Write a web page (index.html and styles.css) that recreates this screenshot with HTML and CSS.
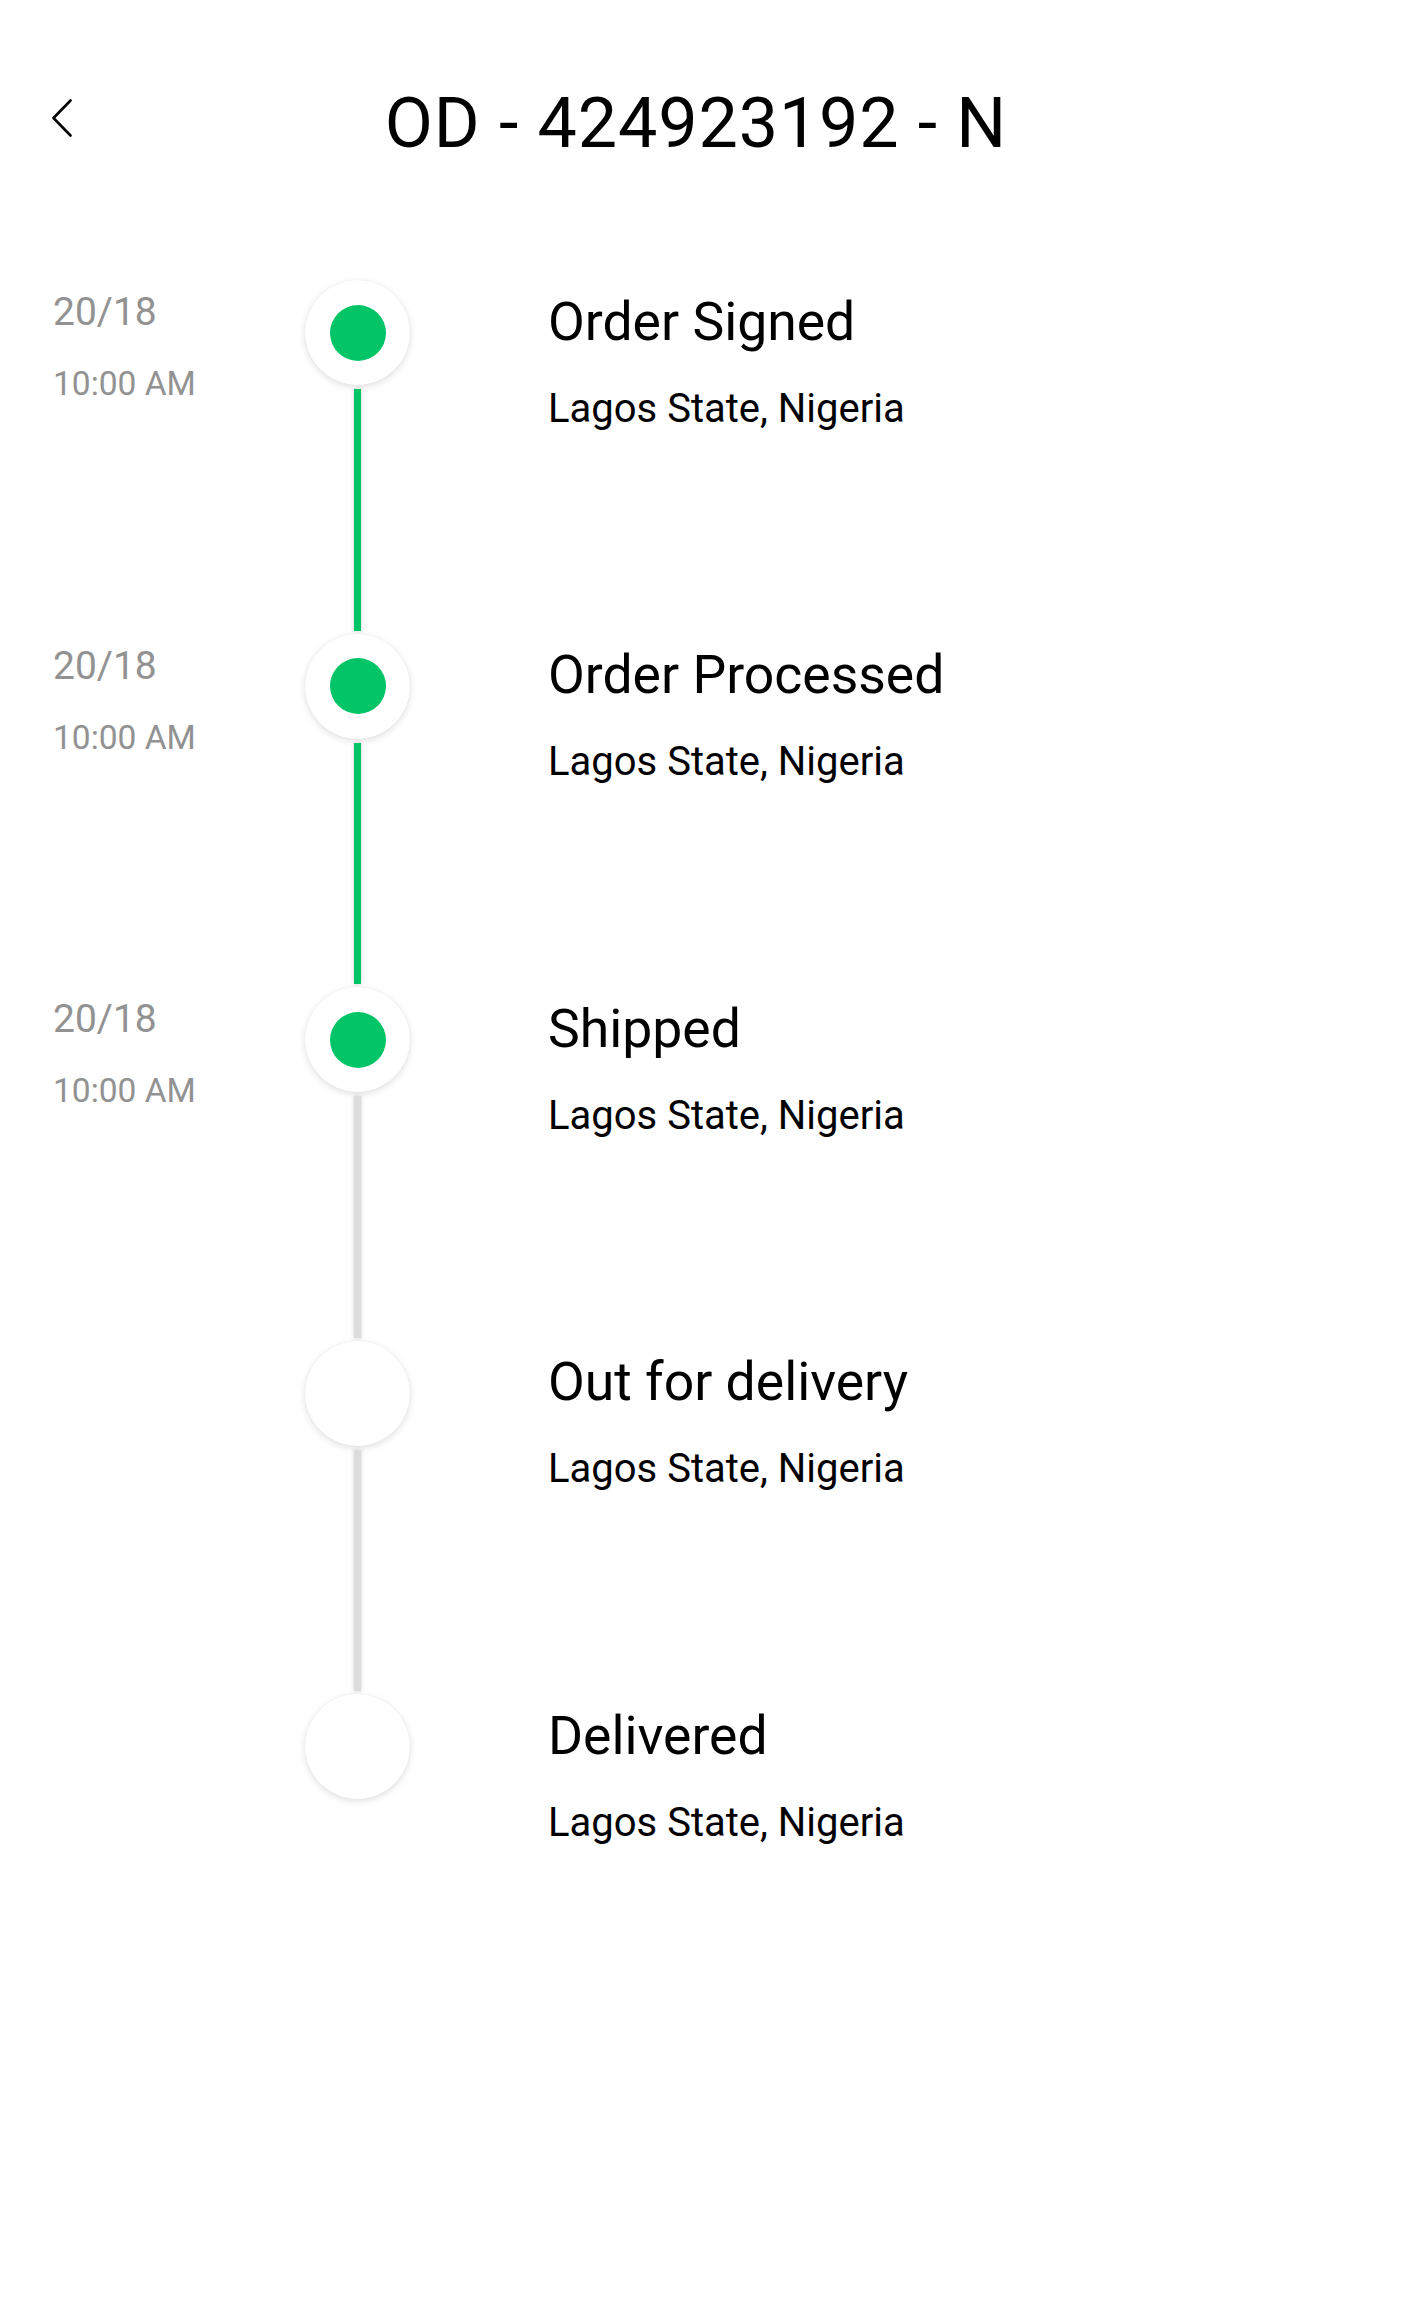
FILE: index.html
```html
<!DOCTYPE html>
<html lang="en">
<head>
<meta charset="utf-8">
<title>OD - 424923192 - N</title>
<link rel="stylesheet" href="styles.css">
</head>
<body>
<header class="header">
  <button class="back" aria-label="Back">
    <svg width="22" height="38" viewBox="0 0 22 38"><polyline points="19.5,1.5 2.5,19 19.5,36.5" fill="none" stroke="#000" stroke-width="2.6" stroke-linecap="round" stroke-linejoin="round"/></svg>
  </button>
  <h1 class="title">OD - 424923192 - N</h1>
</header>
<ol class="timeline">
  <li class="step done">
    <div class="when"><div class="date">20/18</div><div class="time">10:00 AM</div></div>
    <div class="marker"><span class="dot"><span class="fill"></span></span><span class="line"></span></div>
    <div class="info"><div class="name">Order Signed</div><div class="place">Lagos State, Nigeria</div></div>
  </li>
  <li class="step done">
    <div class="when"><div class="date">20/18</div><div class="time">10:00 AM</div></div>
    <div class="marker"><span class="dot"><span class="fill"></span></span><span class="line"></span></div>
    <div class="info"><div class="name">Order Processed</div><div class="place">Lagos State, Nigeria</div></div>
  </li>
  <li class="step current">
    <div class="when"><div class="date">20/18</div><div class="time">10:00 AM</div></div>
    <div class="marker"><span class="dot"><span class="fill"></span></span><span class="line"></span></div>
    <div class="info"><div class="name">Shipped</div><div class="place">Lagos State, Nigeria</div></div>
  </li>
  <li class="step pending">
    <div class="when"></div>
    <div class="marker"><span class="dot"></span><span class="line"></span></div>
    <div class="info"><div class="name">Out for delivery</div><div class="place">Lagos State, Nigeria</div></div>
  </li>
  <li class="step pending last">
    <div class="when"></div>
    <div class="marker"><span class="dot"></span></div>
    <div class="info"><div class="name">Delivered</div><div class="place">Lagos State, Nigeria</div></div>
  </li>
</ol>
</body>
</html>
```
FILE: styles.css
```css
* { box-sizing: border-box; }
html, body { margin: 0; padding: 0; background: #fff; }
body {
  font-family: Roboto, "Liberation Sans", sans-serif;
  color: #000;
  min-height: 2318px;
}
.header {
  display: flex;
  align-items: flex-start;
  padding: 88px 53px 0 51px;
}
.back {
  border: 0;
  background: none;
  padding: 0;
  margin-top: 11px;
  width: 22px;
  height: 38px;
  cursor: pointer;
}
.back svg { display: block; }
.title {
  flex: 1;
  margin: 0;
  padding-right: 50px;
  text-align: center;
  font-weight: 400;
  font-size: 70px;
  line-height: 70px;
  letter-spacing: 0.9px;
}
.timeline {
  list-style: none;
  margin: 122px 0 0;
  padding: 0 0 0 53px;
}
.step {
  display: grid;
  grid-template-columns: 252px 105px 1fr;
  height: 353.5px;
}
.when { padding-top: 9px; color: #929292; }
.date { font-size: 39px; line-height: 46px; }
.time { font-size: 33.5px; line-height: 38px; margin-top: 30px; }
.marker {
  display: flex;
  flex-direction: column;
  align-items: center;
}
.dot {
  width: 105px;
  height: 105px;
  flex: none;
  border-radius: 50%;
  background: #fff;
  box-shadow: 0 2px 7px rgba(0, 0, 0, 0.13), 0 0 1px rgba(0, 0, 0, 0.08);
  display: flex;
  align-items: center;
  justify-content: center;
}
.fill {
  width: 56px;
  height: 56px;
  border-radius: 50%;
  background: #03c567;
}
.line {
  width: 7px;
  flex: 1;
  margin: 4px 0 3px;
  background: #dcdcdc;
  box-shadow: 0 0 4px rgba(0, 0, 0, 0.18);
}
.done .line { background: #03c567; }
.info { padding: 10.5px 0 0 138px; }
.name { font-size: 53.5px; line-height: 62px; }
.place { font-size: 40px; line-height: 46px; margin-top: 33px; }
```
